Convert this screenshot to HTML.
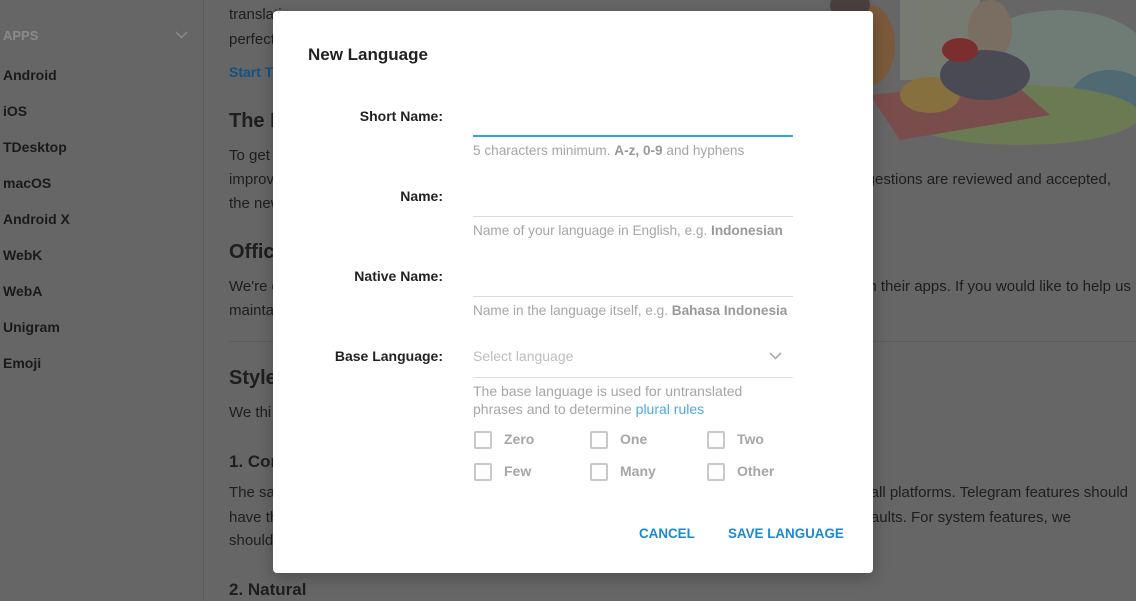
<!DOCTYPE html>
<html><head><meta charset="utf-8"><style>
*{margin:0;padding:0;box-sizing:border-box}
body{width:1136px;height:601px;overflow:hidden;background:#666;font-family:"Liberation Sans",sans-serif;position:relative;color:#1c1c1c}
.a{position:absolute;white-space:nowrap}
.sb{left:3px;font-size:14px;font-weight:bold;color:#1a1a1a}
.bd{font-size:15px;color:#1e1e1e}
.h2{font-size:20px;color:#1e1e1e;font-weight:bold}
.r{text-align:right}
#dlg{position:absolute;left:273px;top:11px;width:600px;height:562px;background:#fff;border-radius:4px;box-shadow:0 4px 16px rgba(0,0,0,.25)}
.lab{position:absolute;right:430px;font-size:14px;font-weight:bold;color:#222;white-space:nowrap}
.ln{position:absolute;left:200px;width:320px;height:1px;background:#dcdcdc}
.hint{position:absolute;left:200px;font-size:13.6px;color:#a6a6a6;white-space:nowrap;line-height:18px}
.hint b{color:#999}
.cb{position:absolute;width:18px;height:18px;border:2px solid #c8c8c8;border-radius:2px}
.cl{position:absolute;font-size:14px;font-weight:bold;color:#a6a6a6}
.btn{position:absolute;top:515px;font-size:13.4px;font-weight:bold;color:#1a8ad0}
</style></head><body>
<div class="a" style="left:203px;top:0;width:1px;height:601px;background:#5c5c5c"></div>
<div class="a sb" style="top:28px;font-size:13px;color:#8a8a8a">APPS</div>
<svg class="a" style="left:175px;top:31px" width="13" height="8"><path d="M1 1l5.5 5.5L12 1" stroke="#888" stroke-width="1.6" fill="none"/></svg>
<div class="a sb" style="top:67px">Android</div>
<div class="a sb" style="top:103px">iOS</div>
<div class="a sb" style="top:139px">TDesktop</div>
<div class="a sb" style="top:175px">macOS</div>
<div class="a sb" style="top:211px">Android X</div>
<div class="a sb" style="top:247px">WebK</div>
<div class="a sb" style="top:283px">WebA</div>
<div class="a sb" style="top:319px">Unigram</div>
<div class="a sb" style="top:355px">Emoji</div>

<div class="a bd" style="left:229px;top:6px">translation</div>
<div class="a bd" style="left:229px;top:31px">perfect</div>
<div class="a bd" style="left:229px;top:64px;color:#15527f;font-weight:bold;font-size:14px">Start T</div>
<div class="a h2" style="left:229px;top:110px">The In</div>
<div class="a bd" style="left:229px;top:147px">To get</div>
<div class="a bd" style="left:229px;top:171px">improve</div>
<div class="a bd" style="left:229px;top:195px">the new</div>
<div class="a h2" style="left:229px;top:241px">Offici</div>
<div class="a bd" style="left:229px;top:278px">We're g</div>
<div class="a bd" style="left:229px;top:302px">mainta</div>
<div class="a" style="left:229px;top:341px;width:907px;height:1px;background:#5c5c5c"></div>
<div class="a h2" style="left:229px;top:367px">Style</div>
<div class="a bd" style="left:229px;top:404px">We thi</div>
<div class="a" style="left:229px;top:452px;font-size:17px;font-weight:bold;color:#1e1e1e">1. Con</div>
<div class="a bd" style="left:229px;top:484px">The sa</div>
<div class="a bd" style="left:229px;top:509px">have th</div>
<div class="a bd" style="left:229px;top:532px">should</div>
<div class="a" style="left:229px;top:580px;font-size:17px;font-weight:bold;color:#1e1e1e">2. Natural</div>

<div class="a bd r" style="right:25px;top:171px">suggestions are reviewed and accepted,</div>
<div class="a bd r" style="right:5px;top:278px">in their apps. If you would like to help us</div>
<div class="a bd r" style="right:8px;top:484px">all platforms. Telegram features should</div>
<div class="a bd r" style="right:65px;top:509px">form defaults. For system features, we</div>

<svg class="a" style="left:760px;top:0" width="376" height="150">
<rect x="0" y="0" width="376" height="150" fill="#666"/>
<ellipse cx="300" cy="60" rx="90" ry="50" fill="#6f7c76"/>
<ellipse cx="350" cy="100" rx="40" ry="30" fill="#4f6a72"/>
<ellipse cx="260" cy="115" rx="120" ry="30" fill="#6a7a52"/>
<rect x="140" y="0" width="80" height="80" fill="#777a70"/>
<path d="M110 95 L250 80 L290 115 L140 140 Z" fill="#7a4d4d"/>
<ellipse cx="170" cy="95" rx="30" ry="18" fill="#86703e"/>
<ellipse cx="110" cy="45" rx="25" ry="40" fill="#7a5a3a"/>
<ellipse cx="230" cy="30" rx="22" ry="30" fill="#7a6e62"/>
<ellipse cx="225" cy="75" rx="45" ry="25" fill="#4a4a55"/>
<ellipse cx="200" cy="50" rx="18" ry="12" fill="#7a2e2e"/>
<ellipse cx="90" cy="5" rx="20" ry="15" fill="#4a4040"/>
</svg>

<div id="dlg">
<div class="a" style="left:35px;top:34px;font-size:17px;font-weight:bold;color:#222">New Language</div>
<div class="lab" style="top:97px">Short Name:</div>
<div class="ln" style="top:124px;height:2px;background:#2ea6df"></div>
<div class="hint" style="top:131px">5 characters minimum. <b>A-z, 0-9</b> and hyphens</div>
<div class="lab" style="top:177px">Name:</div>
<div class="ln" style="top:205px"></div>
<div class="hint" style="top:211px">Name of your language in English, e.g. <b>Indonesian</b></div>
<div class="lab" style="top:257px">Native Name:</div>
<div class="ln" style="top:285px"></div>
<div class="hint" style="top:291px">Name in the language itself, e.g. <b>Bahasa Indonesia</b></div>
<div class="lab" style="top:337px">Base Language:</div>
<div class="hint" style="top:336px;font-size:14px;color:#bdbdbd">Select language</div>
<svg class="a" style="left:496px;top:341px" width="13" height="8"><path d="M1 1l5.5 5.5L12 1" stroke="#aaa" stroke-width="1.6" fill="none"/></svg>
<div class="ln" style="top:366px"></div>
<div class="hint" style="top:371px;font-size:14px">The base language is used for untranslated<br>phrases and to determine <span style="color:#4fa9e0">plural rules</span></div>
<div class="cb" style="left:201px;top:420px"></div><div class="cl" style="left:231px;top:420px">Zero</div>
<div class="cb" style="left:317px;top:420px"></div><div class="cl" style="left:347px;top:420px">One</div>
<div class="cb" style="left:434px;top:420px"></div><div class="cl" style="left:464px;top:420px">Two</div>
<div class="cb" style="left:201px;top:452px"></div><div class="cl" style="left:231px;top:452px">Few</div>
<div class="cb" style="left:317px;top:452px"></div><div class="cl" style="left:347px;top:452px">Many</div>
<div class="cb" style="left:434px;top:452px"></div><div class="cl" style="left:464px;top:452px">Other</div>
<div class="btn" style="left:366px">CANCEL</div>
<div class="btn" style="left:455px">SAVE LANGUAGE</div>
</div>
</body></html>
